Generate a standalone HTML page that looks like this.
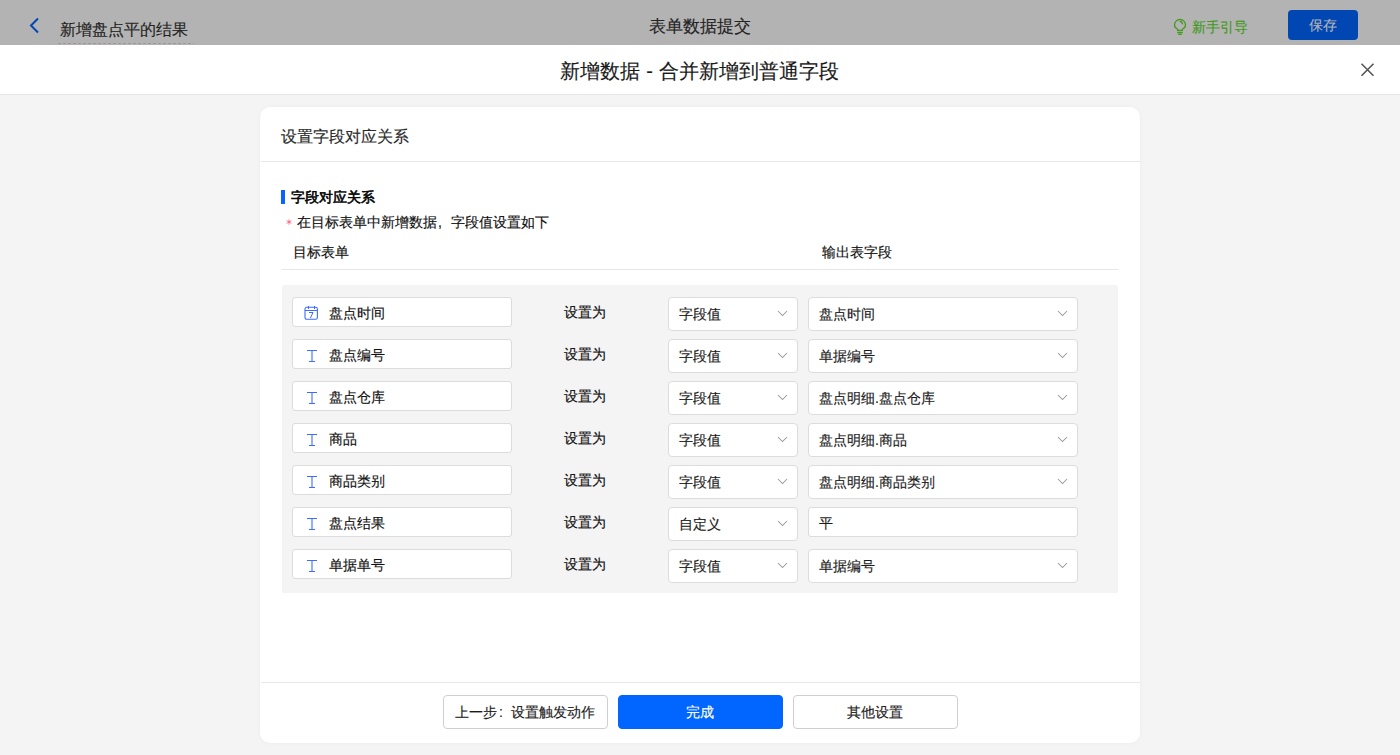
<!DOCTYPE html>
<html><head><meta charset="utf-8">
<style>
*{box-sizing:border-box;margin:0;padding:0}
html,body{width:1400px;height:755px;overflow:hidden;background:#f4f4f4;font-family:"Liberation Sans",sans-serif;color:#333}
.abs{position:absolute}
.t{position:absolute;white-space:nowrap;line-height:1;-webkit-text-stroke:0.15px currentColor}
#top{left:0;top:0;width:1400px;height:45px;background:#b3b3b3}
#mhead{left:0;top:45px;width:1400px;height:50px;background:#fff;border-bottom:1px solid #e6e6e6}
#card{left:260px;top:107px;width:880px;height:636px;background:#fff;border-radius:10px;box-shadow:0 0 4px rgba(0,0,0,0.04)}
.hline{position:absolute;height:1px;background:#e8e8e8}
#gbox{left:282px;top:285px;width:836px;height:308px;background:#f4f4f4;border-radius:2px}
.inp{position:absolute;left:292px;width:220px;height:30px;background:#fff;border:1px solid #dcdcdc;border-radius:3px}
.sel{position:absolute;height:34px;background:#fff;border:1px solid #dcdcdc;border-radius:4px}
.btn{position:absolute;top:695px;width:165px;height:34px;border-radius:4px;border:1px solid #cfcfcf;background:#fff}
</style></head><body>
<div id="top" class="abs"></div>
<!-- back arrow -->
<svg class="abs" style="left:28px;top:17px" width="13" height="17" viewBox="0 0 13 17"><path d="M10 1.5 L3 8.5 L10 15.5" fill="none" stroke="#0047b3" stroke-width="2"/></svg>
<div class="t" style="left:60px;top:22px;font-size:16px;color:#242424">新增盘点平的结果</div>
<div class="abs" style="left:58px;top:43px;width:136px;height:1px;background-image:linear-gradient(90deg,#9a9a9a 60%,transparent 60%);background-size:5px 1px"></div>
<div class="t" style="left:649px;top:18px;font-size:17px;color:#242424">表单数据提交</div>
<!-- bulb -->
<svg class="abs" style="left:1168px;top:14px" width="24" height="26" viewBox="0 0 24 26"><path d="M9.6 16.4 L9.6 15.2 C7.4 14 6.5 12.8 6.5 11 A5.5 5.5 0 1 1 17.5 11 C17.5 12.8 16.6 14 14.4 15.2 L14.4 16.4 Z" fill="none" stroke="#439a1c" stroke-width="1.3" stroke-linejoin="round"/><path d="M9.2 18.5 H14.8 M10.2 20.4 H13.8" stroke="#439a1c" stroke-width="1.3"/><path d="M11.7 7.4 A3.3 3.3 0 0 1 14.6 10.4" fill="none" stroke="#439a1c" stroke-width="1.2"/></svg>
<div class="t" style="left:1192px;top:20px;font-size:14px;color:#439a1c">新手引导</div>
<div class="abs" style="left:1288px;top:10px;width:70px;height:30px;background:#0047b3;border-radius:4px"></div>
<div class="t" style="left:1309px;top:18px;font-size:14px;color:#b3b3b3">保存</div>

<div id="mhead" class="abs"></div>
<div class="t" style="left:560px;top:61px;font-size:20px;color:#1a1a1a;word-spacing:0.6px">新增数据 - 合并新增到普通字段</div>
<svg class="abs" style="left:1360px;top:62px" width="15" height="15" viewBox="0 0 15 15"><path d="M1.5 1.8 L13.5 13.8 M13.5 1.8 L1.5 13.8" stroke="#555" stroke-width="1.6"/></svg>

<div id="card" class="abs"></div>
<div class="t" style="left:281px;top:129px;font-size:16px;color:#2a2a2a">设置字段对应关系</div>
<div class="hline" style="left:261px;top:161px;width:879px"></div>

<div class="abs" style="left:281px;top:190px;width:4px;height:14px;background:#0a62ff"></div>
<div class="t" style="left:291px;top:190px;font-size:14px;color:#000;-webkit-text-stroke:0.55px #000">字段对应关系</div>
<svg class="abs" style="left:286px;top:219px" width="6" height="6" viewBox="0 0 6 6"><path d="M3 0.3 V5.7 M0.6 1.6 L5.4 4.4 M5.4 1.6 L0.6 4.4" stroke="#f04a60" stroke-width="0.7"/></svg>
<div class="t" style="left:297px;top:215px;font-size:14px;color:#111">在目标表单中新增数据<span style="display:inline-block;width:14px;padding-left:1px">,</span>字段值设置如下</div>
<div class="t" style="left:293px;top:245px;font-size:14px;color:#111">目标表单</div>
<div class="t" style="left:822px;top:245px;font-size:14px;color:#111">输出表字段</div>
<div class="hline" style="left:282px;top:269px;width:836px;background:#e6e6e6"></div>

<div id="gbox" class="abs"></div>
<!--ROWS-->
<div class="inp" style="top:297px"></div>
<svg class="abs" style="left:304px;top:306px" width="15" height="15" viewBox="0 0 15 15"><rect x="1" y="1.3" width="12.4" height="12" rx="1.8" fill="none" stroke="#3d6bff" stroke-width="1.1"/><path d="M1 4.5 H13.4" stroke="#3d6bff" stroke-width="1"/><path d="M4.5 0 V3 M10.5 0 V3" stroke="#3d6bff" stroke-width="1"/><path d="M5 6.5 H9 L6.4 12" fill="none" stroke="#3d6bff" stroke-width="1"/></svg>
<div class="t" style="left:329px;top:306px;font-size:14px;color:#111">盘点时间</div>
<div class="t" style="left:564px;top:305px;font-size:14px;color:#111">设置为</div>
<div class="sel" style="left:668px;top:297px;width:130px"></div>
<div class="t" style="left:679px;top:307px;font-size:14px;color:#1c1c1c">字段值</div>
<svg class="abs" style="left:777px;top:310px" width="11" height="7" viewBox="0 0 11 7"><path d="M1 1 L5.5 5.5 L10 1" fill="none" stroke="#999" stroke-width="1.05"/></svg>
<div class="sel" style="left:808px;top:297px;width:270px"></div>
<svg class="abs" style="left:1057px;top:310px" width="11" height="7" viewBox="0 0 11 7"><path d="M1 1 L5.5 5.5 L10 1" fill="none" stroke="#999" stroke-width="1.05"/></svg>
<div class="t" style="left:819px;top:307px;font-size:14px;color:#1c1c1c">盘点时间</div>
<div class="inp" style="top:339px"></div>
<svg class="abs" style="left:306px;top:350px" width="12" height="13" viewBox="0 0 12 13"><path d="M1 0.5 H11 M6 0.5 V11.5 M3 11.5 H9" fill="none" stroke="#3d6bff" stroke-width="1.1"/></svg>
<div class="t" style="left:329px;top:348px;font-size:14px;color:#111">盘点编号</div>
<div class="t" style="left:564px;top:347px;font-size:14px;color:#111">设置为</div>
<div class="sel" style="left:668px;top:339px;width:130px"></div>
<div class="t" style="left:679px;top:349px;font-size:14px;color:#1c1c1c">字段值</div>
<svg class="abs" style="left:777px;top:352px" width="11" height="7" viewBox="0 0 11 7"><path d="M1 1 L5.5 5.5 L10 1" fill="none" stroke="#999" stroke-width="1.05"/></svg>
<div class="sel" style="left:808px;top:339px;width:270px"></div>
<svg class="abs" style="left:1057px;top:352px" width="11" height="7" viewBox="0 0 11 7"><path d="M1 1 L5.5 5.5 L10 1" fill="none" stroke="#999" stroke-width="1.05"/></svg>
<div class="t" style="left:819px;top:349px;font-size:14px;color:#1c1c1c">单据编号</div>
<div class="inp" style="top:381px"></div>
<svg class="abs" style="left:306px;top:392px" width="12" height="13" viewBox="0 0 12 13"><path d="M1 0.5 H11 M6 0.5 V11.5 M3 11.5 H9" fill="none" stroke="#3d6bff" stroke-width="1.1"/></svg>
<div class="t" style="left:329px;top:390px;font-size:14px;color:#111">盘点仓库</div>
<div class="t" style="left:564px;top:389px;font-size:14px;color:#111">设置为</div>
<div class="sel" style="left:668px;top:381px;width:130px"></div>
<div class="t" style="left:679px;top:391px;font-size:14px;color:#1c1c1c">字段值</div>
<svg class="abs" style="left:777px;top:394px" width="11" height="7" viewBox="0 0 11 7"><path d="M1 1 L5.5 5.5 L10 1" fill="none" stroke="#999" stroke-width="1.05"/></svg>
<div class="sel" style="left:808px;top:381px;width:270px"></div>
<svg class="abs" style="left:1057px;top:394px" width="11" height="7" viewBox="0 0 11 7"><path d="M1 1 L5.5 5.5 L10 1" fill="none" stroke="#999" stroke-width="1.05"/></svg>
<div class="t" style="left:819px;top:391px;font-size:14px;color:#1c1c1c">盘点明细.盘点仓库</div>
<div class="inp" style="top:423px"></div>
<svg class="abs" style="left:306px;top:434px" width="12" height="13" viewBox="0 0 12 13"><path d="M1 0.5 H11 M6 0.5 V11.5 M3 11.5 H9" fill="none" stroke="#3d6bff" stroke-width="1.1"/></svg>
<div class="t" style="left:329px;top:432px;font-size:14px;color:#111">商品</div>
<div class="t" style="left:564px;top:431px;font-size:14px;color:#111">设置为</div>
<div class="sel" style="left:668px;top:423px;width:130px"></div>
<div class="t" style="left:679px;top:433px;font-size:14px;color:#1c1c1c">字段值</div>
<svg class="abs" style="left:777px;top:436px" width="11" height="7" viewBox="0 0 11 7"><path d="M1 1 L5.5 5.5 L10 1" fill="none" stroke="#999" stroke-width="1.05"/></svg>
<div class="sel" style="left:808px;top:423px;width:270px"></div>
<svg class="abs" style="left:1057px;top:436px" width="11" height="7" viewBox="0 0 11 7"><path d="M1 1 L5.5 5.5 L10 1" fill="none" stroke="#999" stroke-width="1.05"/></svg>
<div class="t" style="left:819px;top:433px;font-size:14px;color:#1c1c1c">盘点明细.商品</div>
<div class="inp" style="top:465px"></div>
<svg class="abs" style="left:306px;top:476px" width="12" height="13" viewBox="0 0 12 13"><path d="M1 0.5 H11 M6 0.5 V11.5 M3 11.5 H9" fill="none" stroke="#3d6bff" stroke-width="1.1"/></svg>
<div class="t" style="left:329px;top:474px;font-size:14px;color:#111">商品类别</div>
<div class="t" style="left:564px;top:473px;font-size:14px;color:#111">设置为</div>
<div class="sel" style="left:668px;top:465px;width:130px"></div>
<div class="t" style="left:679px;top:475px;font-size:14px;color:#1c1c1c">字段值</div>
<svg class="abs" style="left:777px;top:478px" width="11" height="7" viewBox="0 0 11 7"><path d="M1 1 L5.5 5.5 L10 1" fill="none" stroke="#999" stroke-width="1.05"/></svg>
<div class="sel" style="left:808px;top:465px;width:270px"></div>
<svg class="abs" style="left:1057px;top:478px" width="11" height="7" viewBox="0 0 11 7"><path d="M1 1 L5.5 5.5 L10 1" fill="none" stroke="#999" stroke-width="1.05"/></svg>
<div class="t" style="left:819px;top:475px;font-size:14px;color:#1c1c1c">盘点明细.商品类别</div>
<div class="inp" style="top:507px"></div>
<svg class="abs" style="left:306px;top:518px" width="12" height="13" viewBox="0 0 12 13"><path d="M1 0.5 H11 M6 0.5 V11.5 M3 11.5 H9" fill="none" stroke="#3d6bff" stroke-width="1.1"/></svg>
<div class="t" style="left:329px;top:516px;font-size:14px;color:#111">盘点结果</div>
<div class="t" style="left:564px;top:515px;font-size:14px;color:#111">设置为</div>
<div class="sel" style="left:668px;top:507px;width:130px"></div>
<div class="t" style="left:679px;top:517px;font-size:14px;color:#1c1c1c">自定义</div>
<svg class="abs" style="left:777px;top:520px" width="11" height="7" viewBox="0 0 11 7"><path d="M1 1 L5.5 5.5 L10 1" fill="none" stroke="#999" stroke-width="1.05"/></svg>
<div class="inp" style="left:808px;top:507px;width:270px"></div>
<div class="t" style="left:819px;top:516px;font-size:14px;color:#1c1c1c">平</div>
<div class="inp" style="top:549px"></div>
<svg class="abs" style="left:306px;top:560px" width="12" height="13" viewBox="0 0 12 13"><path d="M1 0.5 H11 M6 0.5 V11.5 M3 11.5 H9" fill="none" stroke="#3d6bff" stroke-width="1.1"/></svg>
<div class="t" style="left:329px;top:558px;font-size:14px;color:#111">单据单号</div>
<div class="t" style="left:564px;top:557px;font-size:14px;color:#111">设置为</div>
<div class="sel" style="left:668px;top:549px;width:130px"></div>
<div class="t" style="left:679px;top:559px;font-size:14px;color:#1c1c1c">字段值</div>
<svg class="abs" style="left:777px;top:562px" width="11" height="7" viewBox="0 0 11 7"><path d="M1 1 L5.5 5.5 L10 1" fill="none" stroke="#999" stroke-width="1.05"/></svg>
<div class="sel" style="left:808px;top:549px;width:270px"></div>
<svg class="abs" style="left:1057px;top:562px" width="11" height="7" viewBox="0 0 11 7"><path d="M1 1 L5.5 5.5 L10 1" fill="none" stroke="#999" stroke-width="1.05"/></svg>
<div class="t" style="left:819px;top:559px;font-size:14px;color:#1c1c1c">单据编号</div>
<!--/ROWS-->
<div class="hline" style="left:261px;top:682px;width:879px"></div>
<div class="btn" style="left:443px"></div>
<div class="t" style="left:455px;top:705px;font-size:14px;color:#1c1c1c">上一步<span style="display:inline-block;width:14px;padding-left:2px">:</span>设置触发动作</div>
<div class="btn" style="left:618px;background:#0066ff;border-color:#0066ff"></div>
<div class="t" style="left:686px;top:705px;font-size:14px;color:#fff">完成</div>
<div class="btn" style="left:793px"></div>
<div class="t" style="left:847px;top:705px;font-size:14px;color:#1c1c1c">其他设置</div>
</body></html>
